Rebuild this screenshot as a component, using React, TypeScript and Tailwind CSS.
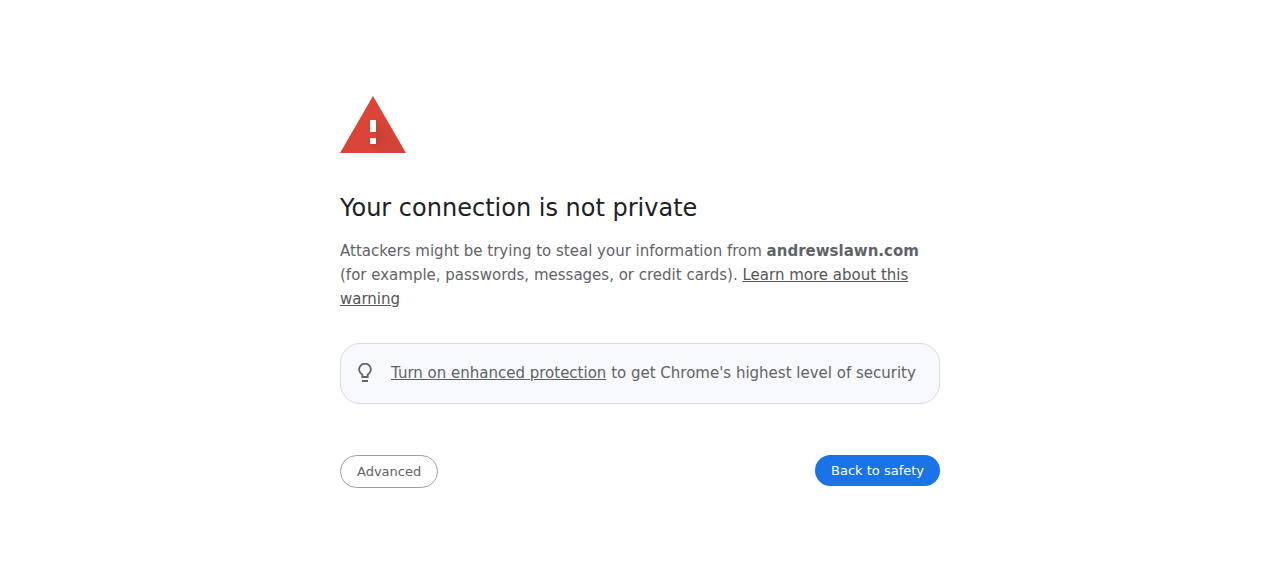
export default function App() {
  return (
    <main className="mx-auto w-full max-w-[600px] pt-[88px] pb-16 font-['DejaVu_Sans',sans-serif] text-[15px] leading-6 text-[#5f6368]">
      <svg className="mb-8 block size-[72px] -ml-[3px]" viewBox="0 0 72 72" aria-hidden="true">
        <defs>
          <radialGradient id="shade" cx="38" cy="49" r="22" gradientUnits="userSpaceOnUse">
            <stop offset="0" stopColor="#3e2723" stopOpacity="0.18" />
            <stop offset="0.5" stopColor="#3e2723" stopOpacity="0.06" />
            <stop offset="1" stopColor="#3e2723" stopOpacity="0.03" />
          </radialGradient>
        </defs>
        <path d="M3 65h66L36 8z" fill="#db4437" />
        <path d="M39 32l13.5 5L69 65H42l-9-9 6-6z" fill="url(#shade)" />
        <path d="M33 32h6v12h-6zM33 50h6v6h-6z" fill="#fff" />
      </svg>
      <h1 className="mb-[15px] text-2xl leading-8 text-[#202124]">Your connection is not private</h1>
      <p>
        Attackers might be trying to steal your information from{' '}
        <strong className="font-bold">andrewslawn.com</strong> (for example, passwords, messages, or credit cards).{' '}
        <a href="#learn-more" className="text-[#555555] underline">Learn more about this warning</a>
      </p>
      <div className="mt-8 flex items-center gap-4 rounded-[20px] border border-[#dadce0] bg-[#f8f9fd] px-3.5 pt-[17px] pb-[18px]">
        <svg className="size-5 shrink-0" viewBox="0 0 20 20" fill="none" stroke="#5f6368" strokeWidth="1.8" aria-hidden="true">
          <path d="M7.3 14v-2.4a5.8 5.8 0 1 1 5.4 0V14zM7 18h6" />
        </svg>
        <p>
          <a href="#enhanced-protection" className="underline">Turn on enhanced protection</a> to get Chrome's highest level of security
        </p>
      </div>
      <div className="mt-[51px] flex items-start justify-between text-[13px] leading-[15px]">
        <button type="button" className="rounded-full border border-[#9aa0a6] px-4 py-2">Advanced</button>
        <button type="button" className="rounded-full bg-[#1a73e8] px-4 py-2 text-white">Back to safety</button>
      </div>
    </main>
  )
}
